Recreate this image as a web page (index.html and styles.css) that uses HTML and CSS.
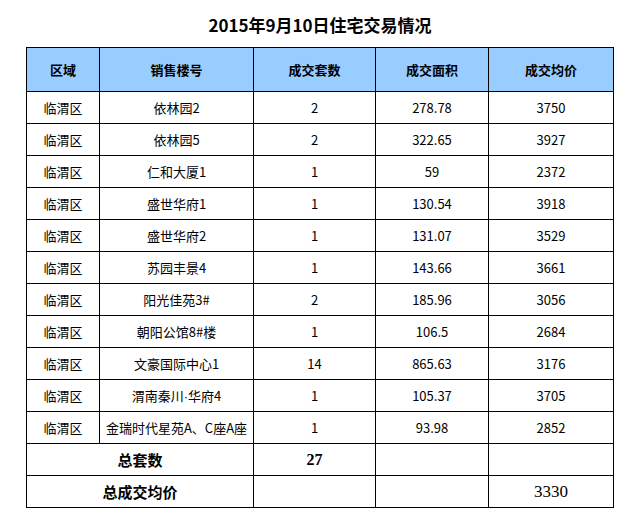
FILE: index.html
```
<!DOCTYPE html>
<html lang="zh">
<head>
<meta charset="utf-8">
<link rel="stylesheet" href="styles.css">
</head>
<body>
<div class="page">
  <h1 class="title">2015年9月10日住宅交易情况</h1>
  <table class="deals">
    <colgroup>
      <col class="c1"><col class="c2"><col class="c3"><col class="c4"><col class="c5">
    </colgroup>
    <thead>
      <tr><th>区域</th><th>销售楼号</th><th>成交套数</th><th>成交面积</th><th>成交均价</th></tr>
    </thead>
    <tbody>
      <tr><td>临渭区</td><td>依林园2</td><td>2</td><td>278.78</td><td>3750</td></tr>
      <tr><td>临渭区</td><td>依林园5</td><td>2</td><td>322.65</td><td>3927</td></tr>
      <tr><td>临渭区</td><td>仁和大厦1</td><td>1</td><td>59</td><td>2372</td></tr>
      <tr><td>临渭区</td><td>盛世华府1</td><td>1</td><td>130.54</td><td>3918</td></tr>
      <tr><td>临渭区</td><td>盛世华府2</td><td>1</td><td>131.07</td><td>3529</td></tr>
      <tr><td>临渭区</td><td>苏园丰景4</td><td>1</td><td>143.66</td><td>3661</td></tr>
      <tr><td>临渭区</td><td>阳光佳苑3#</td><td>2</td><td>185.96</td><td>3056</td></tr>
      <tr><td>临渭区</td><td>朝阳公馆8#楼</td><td>1</td><td>106.5</td><td>2684</td></tr>
      <tr><td>临渭区</td><td>文豪国际中心1</td><td>14</td><td>865.63</td><td>3176</td></tr>
      <tr><td>临渭区</td><td>渭南秦川<span class="dot">·</span>华府4</td><td>1</td><td>105.37</td><td>3705</td></tr>
      <tr><td>临渭区</td><td>金瑞时代星苑A、C座A座</td><td>1</td><td>93.98</td><td>2852</td></tr>
      <tr class="sum"><td colspan="2" class="label">总套数</td><td class="total">27</td><td></td><td></td></tr>
      <tr class="sum"><td colspan="2" class="label">总成交均价</td><td></td><td></td><td class="avg">3330</td></tr>
    </tbody>
  </table>
</div>
</body>
</html>
```
FILE: styles.css
```
html, body {
  margin: 0;
  padding: 0;
  background: #fff;
}
.page {
  padding: 13px 0 0 26px;
  font-family: "Noto Sans CJK SC", "Noto Sans", sans-serif;
  color: #000;
}
.title {
  margin: 0 0 10px 0;
  width: 588px;
  text-align: center;
  font-size: 17px;
  line-height: 24px;
  font-weight: bold;
}
.deals {
  border-collapse: collapse;
  table-layout: fixed;
  width: 588px;
  font-size: 13px;
}
.c1 { width: 73px; }
.c2 { width: 154px; }
.c3 { width: 122px; }
.c4 { width: 113px; }
.c5 { width: 125px; }
.deals th, .deals td {
  border: 1px solid #000;
  text-align: center;
  padding: 0;
  white-space: nowrap;
}
.deals th {
  background: #99ccff;
  height: 43px;
  font-weight: bold;
}
.deals td {
  height: 31px;
}
.dot {
  font-family: "Liberation Sans", sans-serif;
}
.sum .label {
  font-size: 15px;
  font-weight: bold;
}
.sum .total {
  font-family: "Liberation Serif", serif;
  font-size: 16px;
  font-weight: bold;
}
.sum .avg {
  font-family: "Liberation Serif", serif;
  font-size: 17px;
}
```
